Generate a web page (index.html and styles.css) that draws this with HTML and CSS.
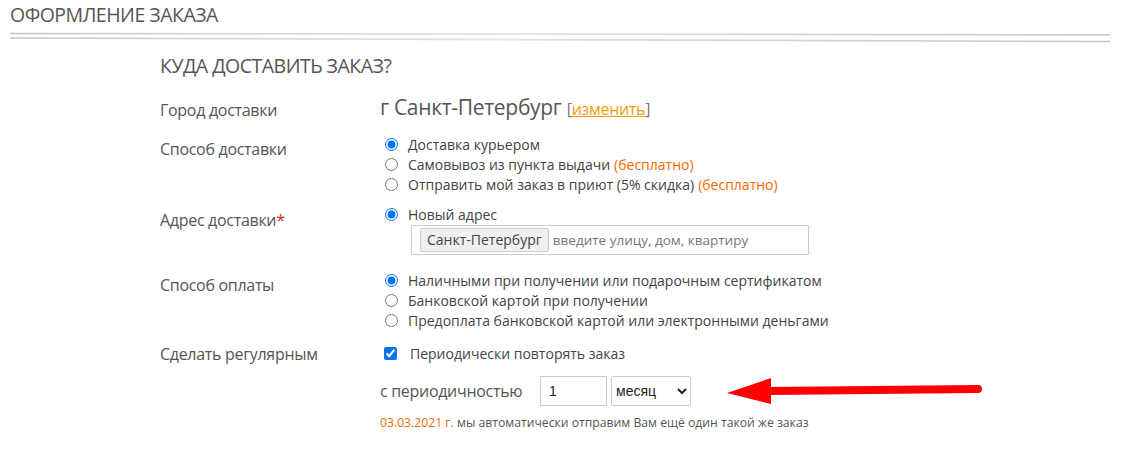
FILE: index.html
```html
<!DOCTYPE html>
<html>
<head>
  <meta charset="utf-8">
  <title>Оформление заказа</title>
  <link rel="stylesheet" href="styles.css">
</head>
<body>
  <h1 class="page-title">ОФОРМЛЕНИЕ ЗАКАЗА</h1>
  <svg class="divider" width="1100" height="12" viewBox="0 0 1100 12">
    <defs>
      <linearGradient id="g1" x1="0" x2="1">
        <stop offset="0" stop-color="#c4c4c4"/>
        <stop offset="0.45" stop-color="#e2e2e2"/>
        <stop offset="1" stop-color="#c4c4c4"/>
      </linearGradient>
    </defs>
    <line x1="0" y1="1.5" x2="1100" y2="2.8" stroke="url(#g1)" stroke-width="1.6"/>
    <line x1="0" y1="6" x2="1100" y2="9.5" stroke="url(#g1)" stroke-width="1.6"/>
  </svg>

  <div class="checkout">
    <h2 class="section-title">КУДА ДОСТАВИТЬ ЗАКАЗ?</h2>

    <div class="row row-city">
      <div class="label">Город доставки</div>
      <div class="value city">г Санкт-Петербург <span class="bracket">[<a href="#">изменить</a>]</span></div>
    </div>

    <div class="row row-delivery">
      <div class="label">Способ доставки</div>
      <div class="value options">
        <label class="opt"><input type="radio" name="delivery" checked> Доставка курьером</label>
        <label class="opt"><input type="radio" name="delivery"> Самовывоз из пункта выдачи <span class="free">(бесплатно)</span></label>
        <label class="opt"><input type="radio" name="delivery"> Отправить мой заказ в приют (5% скидка) <span class="free">(бесплатно)</span></label>
      </div>
    </div>

    <div class="row row-address">
      <div class="label">Адрес доставки<span class="req">*</span></div>
      <div class="value options">
        <label class="opt"><input type="radio" name="address" checked> Новый адрес</label>
        <div class="address-box">
          <span class="city-tag">Санкт-Петербург</span>
          <span class="placeholder">введите улицу, дом, квартиру</span>
        </div>
      </div>
    </div>

    <div class="row row-payment">
      <div class="label">Способ оплаты</div>
      <div class="value options">
        <label class="opt"><input type="radio" name="pay" checked> Наличными при получении или подарочным сертификатом</label>
        <label class="opt"><input type="radio" name="pay"> Банковской картой при получении</label>
        <label class="opt"><input type="radio" name="pay"> Предоплата банковской картой или электронными деньгами</label>
      </div>
    </div>

    <div class="row row-regular">
      <div class="label">Сделать регулярным</div>
      <div class="value options">
        <label class="opt opt-check"><input type="checkbox" checked> Периодически повторять заказ</label>
      </div>
    </div>

    <div class="period">
      <span class="period-label">с периодичностью</span>
      <input class="period-num" type="text" value="1">
      <select class="period-unit">
        <option>месяц</option>
      </select>
      <svg class="arrow" width="260" height="30" viewBox="0 0 260 30">
        <line x1="40" y1="15" x2="251" y2="13" stroke="#ff0000" stroke-width="8" stroke-linecap="round"/>
        <polygon points="0,17 44,2 44,28" fill="#ff0000"/>
      </svg>
    </div>

    <p class="note"><span class="date">03.03.2021 г.</span> мы автоматически отправим Вам ещё один такой же заказ</p>
  </div>
</body>
</html>
```

FILE: styles.css
```css
body {
  margin: 0;
  font-family: "Open Sans", Arial, sans-serif;
  color: #555;
  background: #fff;
}
.page-title {
  margin: 0;
  padding: 3px 0 0 10px;
  font-size: 19.5px;
  font-weight: normal;
  letter-spacing: -0.5px;
  color: #555;
  line-height: 24px;
}
.divider {
  display: block;
  margin: 5px 0 0 10px;
}
.checkout {
  padding-left: 160px;
}
.section-title {
  margin: 10px 0 0;
  font-size: 19.5px;
  font-weight: normal;
  letter-spacing: -0.5px;
  line-height: 24px;
  color: #555;
}
.row {
  display: flex;
}
.label {
  width: 207px;
  flex: none;
  font-size: 16px;
  letter-spacing: -0.3px;
  color: #555;
}
.req {
  color: #d9261c;
}
.row-city {
  margin-top: 15px;
  align-items: center;
}
.row-city .label {
  width: 220px;
  padding-top: 4px;
}
.city {
  font-size: 21px;
  letter-spacing: -0.3px;
  color: #555;
  line-height: 28px;
}
.bracket {
  font-size: 16px;
  color: #777;
}
.bracket a {
  color: #f39c12;
}
.options {
  padding-left: 18px;
  font-size: 14px;
  color: #444;
}
.opt {
  display: flex;
  align-items: center;
  height: 20px;
  white-space: nowrap;
}
.opt input {
  margin: 0 10px 0 0;
  width: 13px;
  height: 13px;
}
.opt .free {
  color: #f56a00;
  margin-left: 4px;
}
.row-delivery {
  margin-top: 11px;
}
.row-delivery .label {
  padding-top: 4px;
}
.row-address {
  margin-top: 10px;
}
.row-address .label {
  padding-top: 5px;
}
.address-box {
  display: flex;
  align-items: center;
  margin: 1px 0 0 26px;
  width: 396px;
  height: 28px;
  border: 1px solid #ccc;
  font-size: 14px;
}
.city-tag {
  margin-left: 8px;
  padding: 0 6px;
  height: 22px;
  line-height: 21px;
  border: 1px solid #ccc;
  border-radius: 2px;
  background: #f0f0f0;
  color: #444;
  font-size: 14px;
}
.placeholder {
  margin-left: 4px;
  color: #777;
  font-size: 13.5px;
}
.row-payment {
  margin-top: 15px;
}
.row-payment .label {
  padding-top: 4px;
}
.row-regular {
  margin-top: 13px;
}
.opt-check input {
  margin: 0 13px 0 -1px;
  accent-color: #0b73e8;
}
.period {
  display: flex;
  align-items: center;
  margin: 11px 0 0 220px;
}
.period-label {
  font-size: 16px;
  letter-spacing: -0.3px;
  color: #555;
  width: 160px;
}
.period-num {
  box-sizing: border-box;
  width: 67px;
  height: 30px;
  margin: 0;
  padding: 0 8px;
  border: 1px solid #ccc;
  font-family: Arial, sans-serif;
  font-size: 14px;
  color: #222;
}
.period-unit {
  box-sizing: border-box;
  width: 80px;
  height: 30px;
  margin: 0 0 0 4px;
  border: 1px solid #ccc;
  border-radius: 2px;
  background: #fff;
  font-family: Arial, sans-serif;
  font-size: 14px;
  color: #222;
}
.arrow {
  margin-left: 36px;
}
.note {
  margin: 8px 0 0 220px;
  font-size: 12.2px;
  color: #555;
}
.note .date {
  color: #f56a00;
}
```
